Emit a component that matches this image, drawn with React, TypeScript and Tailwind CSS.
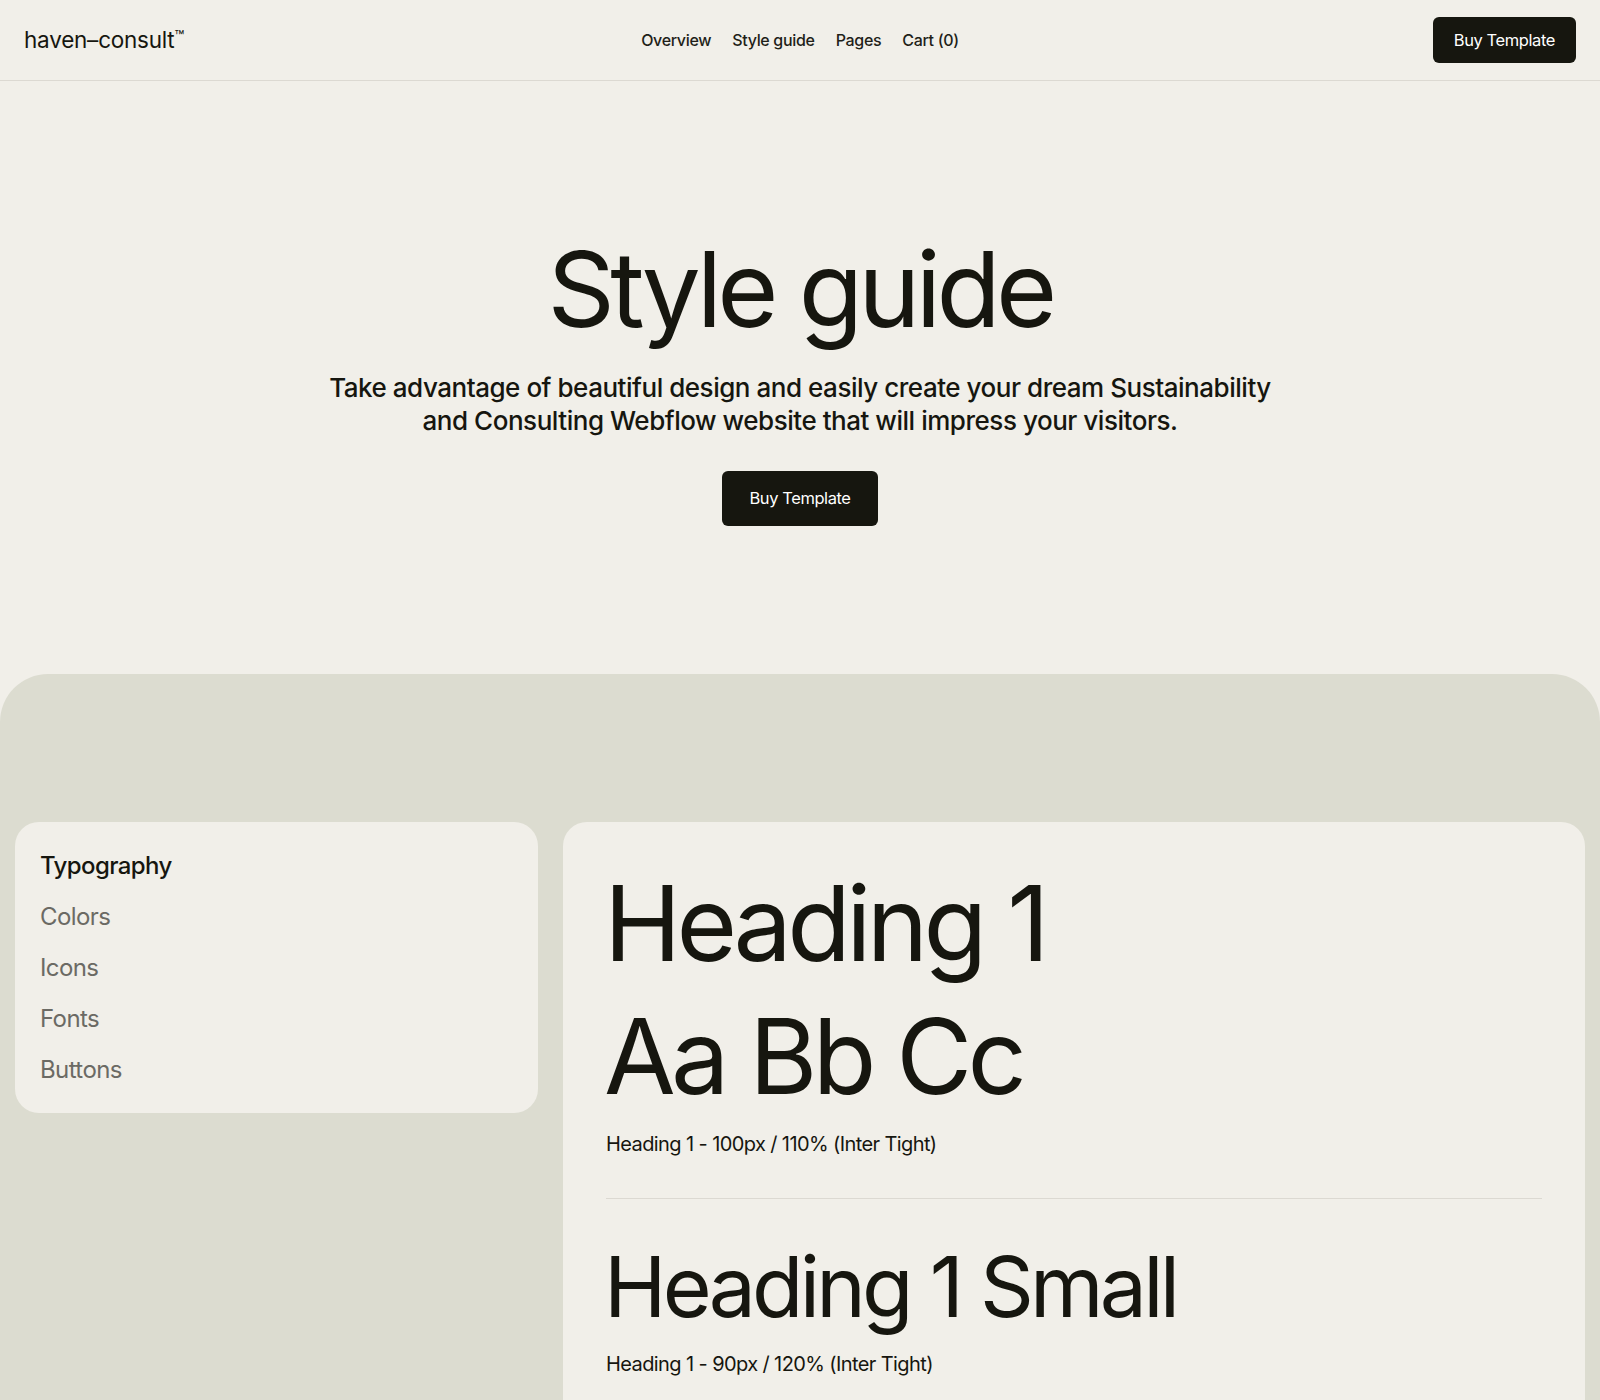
const navLinks = ['Overview', 'Style guide', 'Pages', 'Cart (0)']
const sideLinks = ['Typography', 'Colors', 'Icons', 'Fonts', 'Buttons']

function Header() {
  return (
    <header className="h-[81px] border-b border-[#dcd9d2] px-6 grid grid-cols-3 items-center">
      <div className="text-[22.5px] text-[#16160f] tracking-[-0.01em]">
        haven–consult<span className="relative -top-[6px] text-[16px]">™</span>
      </div>
      <nav className="flex items-center justify-center gap-[21px] text-[16px] font-medium text-[#1f1f19] tracking-[-0.02em]">
        {navLinks.map((l) => (
          <a key={l} href="#">
            {l}
          </a>
        ))}
      </nav>
      <div className="flex justify-end">
        <button className="h-[46px] px-[21px] rounded-md bg-[#16160f] text-white text-[16.5px] tracking-[-0.025em]">
          Buy Template
        </button>
      </div>
    </header>
  )
}

function Hero() {
  return (
    <section className="pt-[150px] pb-[148px] flex flex-col items-center text-center text-[#16160f]">
      <h1 className="text-[105px] leading-[1.1] tracking-[-0.045em]">Style guide</h1>
      <p className="mt-6 text-[26px] leading-[33px] font-medium tracking-[-0.018em] max-w-[980px]">
        Take advantage of beautiful design and easily create your dream Sustainability and Consulting Webflow
        website that will impress your visitors.
      </p>
      <button className="mt-[34px] h-[55px] px-[27px] rounded-md bg-[#16160f] text-white text-[16.5px] tracking-[-0.025em]">
        Buy Template
      </button>
    </section>
  )
}

function TypeSample({ lines, size, label }: { lines: string[]; size: 'lg' | 'sm'; label: string }) {
  return (
    <div>
      <h2
        className={
          size === 'lg'
            ? 'text-[104px] leading-[133px] tracking-[-0.045em] -ml-[2px]'
            : 'text-[84px] leading-[103px] tracking-[-0.045em] -ml-[2px]'
        }
      >
        {lines.map((l) => (
          <span key={l} className="block">
            {l}
          </span>
        ))}
      </h2>
      <p className={size === 'lg' ? 'mt-[7px] text-[20px] leading-[28px] tracking-[-0.03em]' : 'mt-3 text-[20px] leading-[28px] tracking-[-0.03em]'}>
        {label}
      </p>
    </div>
  )
}

export default function App() {
  return (
    <div className="min-h-[1400px] bg-[#f1efe9] font-['Inter',sans-serif]">
      <Header />
      <Hero />
      <section className="bg-[#dcdcd0] rounded-t-[48px] pt-[148px] px-[15px] pb-10 flex items-start gap-[25px]">
        <aside className="w-[523px] shrink-0 bg-[#f1efe9] rounded-3xl pl-[25px] pt-[18px] pb-[18px] flex flex-col">
          {sideLinks.map((l, i) => (
            <a
              key={l}
              href="#"
              className={
                'text-[24px] leading-[51px] tracking-[-0.025em] ' + (i === 0 ? 'text-[#16160f] font-medium' : 'text-[#6b6a64]')
              }
            >
              {l}
            </a>
          ))}
        </aside>
        <main className="flex-1 bg-[#f1efe9] rounded-3xl px-[43px] pt-[35px] pb-16 text-[#16160f]">
          <TypeSample lines={['Heading 1', 'Aa Bb Cc']} size="lg" label="Heading 1 - 100px / 110% (Inter Tight)" />
          <div className="mt-10 mb-9 h-px bg-[#dcd9d2]" />
          <TypeSample lines={['Heading 1 Small']} size="sm" label="Heading 1 - 90px / 120% (Inter Tight)" />
        </main>
      </section>
    </div>
  )
}
